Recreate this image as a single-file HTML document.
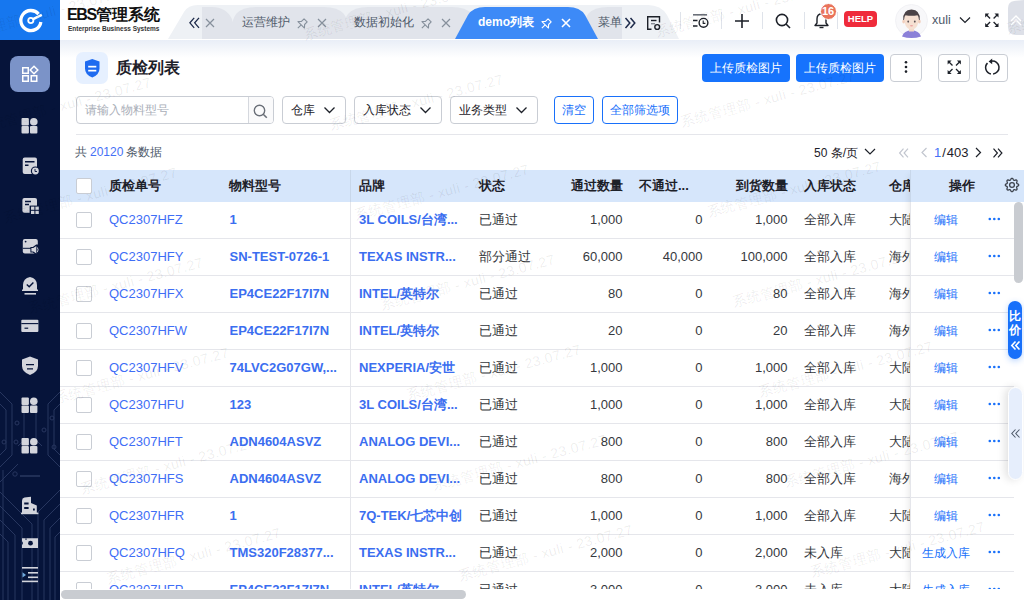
<!DOCTYPE html>
<html><head><meta charset="utf-8">
<style>
*{box-sizing:border-box;margin:0;padding:0}
html,body{width:1024px;height:600px;overflow:hidden;background:#fff}
body{position:relative;font-family:"Liberation Sans",sans-serif;font-size:12px;color:#1d2129}
.a{position:absolute}
svg{display:block;overflow:visible}
/* sidebar */
#side{left:0;top:0;width:60px;height:600px;background:#06143a;overflow:hidden}
#logo{left:0;top:0;width:60px;height:40px;background:#1677ef}
.si{position:absolute;left:22px;width:16px;height:16px}
/* header */
#hdr{left:60px;top:0;width:964px;height:40px;background:#fff}
.tabtxt{position:absolute;top:13px;font-size:12px;line-height:18px;color:#4e5969;white-space:nowrap}
.sep{position:absolute;top:12px;width:1px;height:17px;background:#dfe3ea}
/* content */
#main{left:60px;top:40px;width:964px;height:560px;background:linear-gradient(#e9eef7 0px,#fff 18px,#fff 100%);overflow:hidden}
.btnp{position:absolute;top:14px;height:28px;border-radius:4px;background:#1673fd;color:#fff;font-size:12px;line-height:28px;text-align:center}
.btno{position:absolute;top:14px;width:32px;height:28px;border-radius:4px;border:1px solid #c9cdd4;background:#fff}
.sel{position:absolute;top:56px;height:28px;border:1px solid #c9cdd4;border-radius:4px;background:#fff;font-size:12px;line-height:26px;color:#1d2129;padding-left:8px}
.sel svg{position:absolute;right:10px;top:10px}
.btnl{position:absolute;top:56px;height:28px;border:1px solid #1870fa;border-radius:4px;background:#fff;color:#1870fa;font-size:12px;line-height:26px;text-align:center}
/* table */
#thead{left:0;top:130px;width:964px;height:32px;background:#d6e6fb}
.th{position:absolute;top:0;line-height:32px;font-size:13px;font-weight:bold;color:#1d2129;white-space:nowrap}
.row{position:absolute;left:0;width:952px;height:37px;border-bottom:1px solid #e5e6eb;background:#fff}
.td{position:absolute;top:0;line-height:36px;font-size:13px;color:#35383d;white-space:nowrap}
.cb{position:absolute;left:16px;width:16px;height:16px;border:1px solid #c9cdd4;border-radius:2px;background:#fff}
.lk{color:#3f6ef6}
.bl{color:#3b6ef0;font-weight:bold}
.r{text-align:right}
</style></head><body>

<!-- SIDEBAR -->
<div id="side" class="a">
  <svg class="a" style="left:0;top:40px" width="60" height="560" viewBox="0 40 60 560">
    <!-- circuit pattern -->
    <g fill="none" stroke="#27365f" stroke-width="1">
      <path d="M0 392 L12 404 L12 455 L0 467"/>
      <path d="M0 404 L6 410 L6 449 L0 455"/>
      <circle cx="4" cy="442" r="2"/><circle cx="17" cy="423" r="2"/><circle cx="16" cy="442" r="2"/>
      <path d="M60 392 L48 404 L48 455 L60 467"/>
      <path d="M60 404 L54 410 L54 449 L60 455"/>
      <circle cx="52" cy="418" r="2"/><circle cx="54" cy="447" r="2"/><circle cx="44" cy="430" r="2"/>
      <path d="M24 400 L24 440 L18 446"/>
      <path d="M36 400 L36 440 L42 446"/>
      <path d="M3 470 L3 600"/>
      <path d="M0 482 L18 464"/>
      <circle cx="15" cy="474" r="2.2"/>
      <path d="M0 492 L32 524 L32 600"/>
      <path d="M0 506 L22 528 L22 600"/>
      <path d="M0 520 L15 535 L15 600"/>
      <path d="M0 534 L8 542 L8 600"/>
      <path d="M60 490 L38 512 L38 600"/>
      <path d="M60 504 L44 520 L44 600"/>
      <path d="M60 518 L50 528 L50 600"/>
      <path d="M60 532 L55 537 L55 600"/>
    </g>
    <!-- active button -->
    <rect x="10" y="56" width="40" height="36" rx="8" fill="#7b93c8"/>
    <g fill="none" stroke="#fff" stroke-width="1.5">
      <rect x="22.75" y="67.75" width="5.5" height="5.5"/>
      <path d="M34 66.2 L37.8 70 L34 73.8 L30.2 70 Z"/>
      <rect x="22.75" y="75.75" width="5.5" height="5.5"/>
      <rect x="31.25" y="75.75" width="5.5" height="5.5"/>
    </g>
    <!-- grid icons -->
    <g id="grid" fill="#d3d5dc">
      <rect x="21.5" y="118" width="7.4" height="7.4" rx="1"/>
      <circle cx="33.8" cy="121.7" r="3.8"/>
      <rect x="21.5" y="126" width="7.4" height="7.4" rx="1"/>
      <rect x="30" y="126" width="7.4" height="7.4" rx="1"/>
    </g>
    <use href="#grid" y="279.5"/>
    <use href="#grid" y="320"/>
    <!-- doc clock -->
    <rect x="22.7" y="157.4" width="14.3" height="16.6" rx="2" fill="#d3d5dc"/>
    <path d="M25 161.7 H34.5 M25 165.3 H28.5" stroke="#06143a" stroke-width="1.5"/>
    <circle cx="35.4" cy="171" r="4.6" fill="#06143a"/>
    <circle cx="35.4" cy="171" r="3.4" fill="#d3d5dc"/>
    <path d="M35 169 V171.5 H37" fill="none" stroke="#06143a" stroke-width="0.9"/>
    <!-- doc grid -->
    <rect x="22.4" y="198" width="14.6" height="14.8" rx="2" fill="#d3d5dc"/>
    <path d="M25 201.5 H31 M25 204.5 H29" stroke="#06143a" stroke-width="1.5"/>
    <rect x="29.6" y="205.6" width="10" height="9" fill="#06143a"/>
    <rect x="31" y="206.6" width="3.4" height="3.2" fill="#d3d5dc"/><rect x="35.4" y="206.6" width="3.4" height="3.2" fill="#d3d5dc"/>
    <rect x="31" y="210.8" width="3.4" height="3.2" fill="#d3d5dc"/><rect x="35.4" y="210.8" width="3.4" height="3.2" fill="#d3d5dc"/>
    <!-- card speaker -->
    <rect x="22.8" y="239" width="15" height="14.6" rx="2" fill="#d3d5dc"/>
    <path d="M22.8 248.3 H31" stroke="#06143a" stroke-width="1"/>
    <circle cx="25.6" cy="241.6" r="0.9" fill="#06143a"/>
    <path d="M30.4 247 H32.8 L36.2 244.6 H39 V255 H36.2 L32.8 252.6 H30.4 Z" fill="#06143a"/>
    <path d="M31.4 248 H33.3 L36.3 246 V253.6 L33.3 251.6 H31.4 Z" fill="#d3d5dc"/>
    <path d="M37.3 247.4 Q38.9 249.8 37.3 252.2" fill="none" stroke="#d3d5dc" stroke-width="0.9"/>
    <!-- alarm -->
    <path d="M23 290.5 V285 Q23 278.5 30 277 Q37 278.5 37 285 V290.5 Z" fill="#d3d5dc"/>
    <path d="M22 289.5 H38 V291 H22 Z" fill="#d3d5dc"/>
    <path d="M26.8 284.5 L29.2 286.8 L33.4 282.6" fill="none" stroke="#06143a" stroke-width="1.4"/>
    <rect x="24.5" y="293" width="11.5" height="1.6" fill="#d3d5dc"/>
    <!-- card -->
    <rect x="21.3" y="319.7" width="17.1" height="12.2" rx="1" fill="#d3d5dc"/>
    <path d="M21.3 323.6 H38.4" stroke="#06143a" stroke-width="1.1"/>
    <path d="M24.5 328.2 H28.2" stroke="#06143a" stroke-width="1.2"/>
    <!-- shield -->
    <path d="M30 356.5 L38 359.5 V366 Q38 372 30 375 Q22 372 22 366 V359.5 Z" fill="#d3d5dc"/>
    <path d="M26 364.6 H34 M27 368.8 H33" stroke="#06143a" stroke-width="1.3"/>
    <!-- separator -->
    <rect x="20" y="475.5" width="20" height="1" fill="#3a4a72"/>
    <!-- building -->
    <path d="M22 514 V500.5 Q22 498 24.5 497.5 L31 496.8 V514 Z" fill="#d3d5dc"/>
    <path d="M31 503 L36.8 505.5 V514 H31 Z" fill="#d3d5dc"/>
    <rect x="21" y="512.6" width="17.4" height="1.6" fill="#d3d5dc"/>
    <rect x="24.2" y="502.5" width="4.4" height="2" fill="#06143a"/><rect x="24.2" y="507" width="4.4" height="2" fill="#06143a"/>
    <rect x="33" y="508.5" width="1.8" height="2" fill="#06143a"/>
    <!-- ticket -->
    <path d="M22 538.3 H38 V548 H22 V545 Q24 543.2 22 541.3 Z" fill="#d3d5dc"/>
    <circle cx="30.5" cy="543.2" r="2.4" fill="#06143a"/>
    <path d="M26 538.3 V540" stroke="#06143a" stroke-width="1"/>
    <!-- list -->
    <g fill="#d3d5dc">
      <rect x="22" y="567" width="16" height="1.6"/>
      <rect x="28" y="572" width="10" height="1.6"/>
      <rect x="28" y="576.5" width="10" height="1.6"/>
      <rect x="22" y="580.6" width="16" height="1.6"/>
      <path d="M22.5 572.2 L26 574.9 L22.5 577.6 Z" fill="#6fa8dc"/>
    </g>
  </svg>
  <div id="logo" class="a">
    <svg class="a" style="left:0;top:0" width="60" height="40" viewBox="0 0 60 40">
      <path d="M38.6 14.1 A10.05 10.05 0 1 0 40.85 22.0" fill="none" stroke="#fff" stroke-width="3.3"/>
      <circle cx="30.8" cy="20.5" r="2.6" fill="none" stroke="#fff" stroke-width="1.8"/>
      <path d="M32.6 19.3 L41.8 14.9" stroke="#fff" stroke-width="2.6"/>
    </svg>
  </div>
</div>

<!-- HEADER -->
<div id="hdr" class="a">
  <div class="a" style="left:7px;top:6px;font-size:16px;font-weight:bold;line-height:18px;color:#111;white-space:nowrap"><span style="letter-spacing:-1.4px">EBS</span><span style="margin-left:0px">管理系统</span></div>
  <div class="a" style="left:8px;top:24px;font-size:6.5px;font-weight:bold;line-height:9px;color:#333;white-space:nowrap">Enterprise Business Systems</div>
  <!-- tab bar -->
  <svg class="a" style="left:0;top:0" width="964" height="40">
    <path d="M108 39 L124 12 Q128 5 138 5 L588 5 Q601 5 607 15 L619 39 Z" fill="#eef1f5"/>
    <!-- tab clipped -->
    <path d="M142 39 L142 7 L152 7 Q166 7 172 19 L176 39 Z" fill="#e1e4eb"/>
    <!-- tab 2 -->
    <path d="M168 39 Q172 19 176 14 Q182 7 196 7 L264 7 Q278 7 284 14 Q288 19 292 39 Z" fill="#e1e4eb"/>
    <!-- tab 3 -->
    <path d="M278 39 Q284 19 288 14 Q294 7 308 7 L392 7 Q406 7 412 14 Q416 19 420 39 Z" fill="#e1e4eb"/>
    <!-- tab menu -->
    <path d="M520 39 Q524 19 528 14 Q534 7 548 7 L562 7 L562 39 Z" fill="#e1e4eb"/>
    <!-- active -->
    <path d="M395 39 L408 15 Q413 7 425 7 L508 7 Q520 7 525 15 L538 39 Z" fill="#3d8af7"/>
  </svg>
  <svg class="a" style="left:129px;top:17px" width="11" height="12"><path d="M5.2 0.8 L0.9 5.8 L5.2 10.8 M10 0.8 L5.7 5.8 L10 10.8" fill="none" stroke="#1d2a4a" stroke-width="1.3"/></svg>
  <svg class="a" style="left:146px;top:19px" width="8" height="8"><path d="M0 0L8 8M8 0L0 8" stroke="#86909c" stroke-width="1.2"/></svg>
<svg class="a" style="left:0;top:0" width="964" height="40"><g transform="translate(237,17)" fill="none" stroke="#86909c" stroke-width="1.1" stroke-linejoin="round"><path d="M7.04 1.84 L4.5 4.39 L0.96 4.53 L7.47 11.04 L7.61 7.5 L10.16 4.96 Z"/><path d="M4.22 7.78 L0.82 11.18"/></g><path d="M258 19l8 8M266 19l-8 8" stroke="#86909c" stroke-width="1.2" fill="none"/><g transform="translate(361,17)" fill="none" stroke="#86909c" stroke-width="1.1" stroke-linejoin="round"><path d="M7.04 1.84 L4.5 4.39 L0.96 4.53 L7.47 11.04 L7.61 7.5 L10.16 4.96 Z"/><path d="M4.22 7.78 L0.82 11.18"/></g><path d="M382 19l8 8M390 19l-8 8" stroke="#86909c" stroke-width="1.2" fill="none"/><g transform="translate(481,17)" fill="none" stroke="#fff" stroke-width="1.1" stroke-linejoin="round"><path d="M7.04 1.84 L4.5 4.39 L0.96 4.53 L7.47 11.04 L7.61 7.5 L10.16 4.96 Z"/><path d="M4.22 7.78 L0.82 11.18"/></g><path d="M502 19l8 8M510 19l-8 8" stroke="#fff" stroke-width="1.6" fill="none"/>
    <path d="M565.5 18l4.3 5l-4.3 5M570.5 18l4.3 5l-4.3 5" fill="none" stroke="#1d2a4a" stroke-width="1.5"/>
  </svg>
  <div class="tabtxt" style="left:182px">运营维护</div>
  <div class="tabtxt" style="left:294px">数据初始化</div>
  <div class="tabtxt" style="left:418px;color:#fff;font-weight:bold;font-size:12px">demo列表</div>
  <div class="tabtxt" style="left:538px">菜单</div>
  <!-- header right -->
  <svg class="a" style="left:0;top:0" width="964" height="40">
    <!-- doc icon 647-660 -->
    <g fill="none" stroke="#1d2129" stroke-width="1.4">
      <path d="M599.5 22.5 V16.7 H587.7 V29.3 H591.5"/>
      <path d="M591 20.5 H596.5"/>
      <path d="M591 23.7 H595" stroke="#8a8f99"/>
      <circle cx="597.2" cy="27" r="2.4"/>
    </g>
    <rect x="620" y="12" width="1" height="17" fill="#dfe3ea"/>
    <!-- list clock icon 693-708 -->
    <g fill="none" stroke="#1d2129" stroke-width="1.4">
      <path d="M633 14.8 H647" stroke="#6b7079" stroke-width="1.6"/>
      <path d="M633 20.5 H637.5 M633 26 H637.5"/>
      <circle cx="643.5" cy="22.8" r="4.4"/>
      <path d="M643.2 20.6 V23.4 H645.4" stroke-width="1.1"/>
    </g>
    <rect x="661" y="12" width="1" height="17" fill="#dfe3ea"/>
    <!-- plus 735-749 -->
    <path d="M675 21 H689 M682 14 V28" stroke="#1d2129" stroke-width="1.6" fill="none"/>
    <rect x="702" y="12" width="1" height="17" fill="#dfe3ea"/>
    <!-- search 776-790 -->
    <g fill="none" stroke="#1d2129" stroke-width="1.6"><circle cx="722" cy="20" r="5.6"/><path d="M726 24 L730 28"/></g>
    <rect x="744" y="12" width="1" height="17" fill="#dfe3ea"/>
    <!-- bell 814-828 -->
    <g fill="none" stroke="#1d2129" stroke-width="1.4" stroke-linejoin="round">
      <path d="M755 25.5 H768 L766 23 V19 Q766 14 761.5 14 Q757 14 757 19 V23 Z"/>
      <path d="M759.5 27.5 H763.5"/>
    </g>
    <rect x="777" y="12" width="1" height="17" fill="#dfe3ea"/>
  </svg>
  <div class="a" style="left:759.5px;top:2.5px;width:17px;height:17px;border-radius:9px;background:#e9735b;color:#fff;font-size:11px;font-weight:bold;line-height:15px;text-align:center;border:1px solid #fff">16</div>
  <div class="a" style="left:784px;top:11px;width:33px;height:16px;border-radius:4px;background:#ef2b3b;color:#fff;font-size:9.5px;font-weight:bold;line-height:16px;text-align:center">HELP</div>
  <!-- avatar -->
  <svg class="a" style="left:835px;top:4px" width="33" height="33" viewBox="0 0 33 33">
    <circle cx="16.5" cy="16.5" r="16" fill="#f8f8fa" stroke="#efeff2" stroke-width="0.8"/>
    <path d="M7 32.5 Q9 26.5 16.5 26.3 Q24 26.5 26 32.5 Q21.5 34 16.5 34 Q11.5 34 7 32.5Z" fill="#8b80d8"/>
    <rect x="14" y="23" width="5" height="4.5" fill="#f3d9c8"/>
    <path d="M8.8 10 Q8.8 25.5 16.5 25.5 Q24.2 25.5 24.2 10 Z" fill="#f6e0d2"/>
    <ellipse cx="8.6" cy="17.5" rx="1.3" ry="2" fill="#f1cfbd"/><ellipse cx="24.4" cy="17.5" rx="1.3" ry="2" fill="#f1cfbd"/>
    <path d="M8.3 16 Q7.6 6 16.5 5.6 Q25.4 6 24.7 16 L24 16 Q23.6 12 22.5 11.3 Q16.5 12.3 10.5 11.3 Q9.4 12 9 16 Z" fill="#4b4347"/>
    <ellipse cx="13.2" cy="17.6" rx="0.9" ry="1.1" fill="#5a5054"/><ellipse cx="19.8" cy="17.6" rx="0.9" ry="1.1" fill="#5a5054"/>
    <ellipse cx="16.5" cy="21.8" rx="1.6" ry="0.7" fill="#eda6a6"/>
  </svg>
  <div class="a" style="left:872px;top:11px;font-size:12.5px;line-height:18px;color:#4e5969">xuli</div>
  <svg class="a" style="left:0;top:0" width="964" height="40">
    <path d="M900 17.5 L905 22.5 L910 17.5" fill="none" stroke="#1d2129" stroke-width="1.2"/>
    <!-- fullscreen 985-999 -->
    <g transform="translate(924.6,13)"><g fill="none" stroke="#1d2129" stroke-width="1.3"><path d="M1.5 1.5L5.5 5.5M13 1.5L9 5.5M1.5 13L5.5 9M13 13L9 9"/></g><g fill="#1d2129"><path d="M0.6 0.6H4.6L0.6 4.6Z"/><path d="M13.9 0.6H9.9L13.9 4.6Z"/><path d="M0.6 13.9H4.6L0.6 9.9Z"/><path d="M13.9 13.9H9.9L13.9 9.9Z"/></g></g>
    <!-- back-to-top tab at right -->
    <path d="M964 0 V35 L956 35 Q948 35 948 27 V8 Q948 2 954 1 Z" fill="#d9dde5" opacity="0.9"/>
    <path d="M951 21 L956 16 L961 21 M951 25 L956 20 L961 25" fill="none" stroke="#fff" stroke-width="1.3"/>
  </svg>
</div>

<!-- MAIN -->
<div id="main" class="a">
  <!-- title -->
  <div class="a" style="left:16px;top:12px;width:32px;height:32px;border-radius:7px;background:#e6f0ff"></div>
  <svg class="a" style="left:25px;top:19px" width="15" height="19" viewBox="0 0 15 19">
    <path d="M7.25 0 L14.5 2.6 V9.5 Q14.5 15.6 7.25 18.6 Q0 15.6 0 9.5 V2.6 Z" fill="#1f6bf0"/>
    <rect x="3.2" y="6.8" width="8.1" height="1.7" fill="#fff"/><rect x="3.2" y="10.8" width="8.1" height="1.7" fill="#fff"/>
  </svg>
  <div class="a" style="left:56px;top:16px;font-size:16px;font-weight:bold;line-height:24px;color:#1d2129">质检列表</div>
  <div class="btnp" style="left:642px;width:88px">上传质检图片</div>
  <div class="btnp" style="left:736px;width:88px">上传质检图片</div>
  <div class="btno" style="left:830px"><svg class="a" style="left:13px;top:5px" width="4" height="14"><circle cx="2" cy="2.3" r="1.3" fill="#1d2129"/><circle cx="2" cy="7" r="1.3" fill="#1d2129"/><circle cx="2" cy="11.6" r="1.3" fill="#1d2129"/></svg></div>
  <div class="btno" style="left:878px"><svg class="a" style="left:8px;top:5px" width="14" height="14" viewBox="0 0 14 14"><g fill="none" stroke="#1d2129" stroke-width="1.3"><path d="M1.5 1.5L5.5 5.5M13 1.5L9 5.5M1.5 13L5.5 9M13 13L9 9"/></g><g fill="#1d2129"><path d="M0.6 0.6H4.6L0.6 4.6Z"/><path d="M13.9 0.6H9.9L13.9 4.6Z"/><path d="M0.6 13.9H4.6L0.6 9.9Z"/><path d="M13.9 13.9H9.9L13.9 9.9Z"/></g></svg></div>
  <div class="btno" style="left:916px"><svg class="a" style="left:0;top:0" width="30" height="26" viewBox="0 0 30 26"><g fill="none" stroke="#1d2129" stroke-width="1.5"><path d="M14.6 6.2 A6.4 6.4 0 1 1 16.1 18.9"/><path d="M10.5 8.1 A6.4 6.4 0 0 0 13.9 18.9"/></g><path d="M11.6 6.4 L15.2 3.6 L15.2 9.2 Z" fill="#1d2129"/></svg></div>
  <!-- filters -->
  <div class="a" style="left:16px;top:56px;width:198px;height:28px;border:1px solid #c9cdd4;border-radius:4px;background:#fff;overflow:hidden">
    <div class="a" style="left:8px;top:0;line-height:26px;font-size:12px;color:#a9aeb8">请输入物料型号</div>
    <div class="a" style="left:170.5px;top:0;width:27px;height:26px;border-left:1px solid #d5d8de;background:#fafafb"></div>
    <svg class="a" style="left:176px;top:6.5px" width="15" height="15" viewBox="0 0 15 15"><circle cx="6.5" cy="6.5" r="5.2" fill="none" stroke="#6b7079" stroke-width="1.4"/><path d="M10.2 10.2 L13.8 13.8" stroke="#6b7079" stroke-width="1.6"/></svg>
  </div>
  <div class="sel" style="left:222px;width:64px">仓库<svg width="11" height="6" viewBox="0 0 11 6"><path d="M0.5 0.5 L5.5 5.5 L10.5 0.5" fill="none" stroke="#1d2129" stroke-width="1.3"/></svg></div>
  <div class="sel" style="left:294px;width:88px">入库状态<svg width="11" height="6" viewBox="0 0 11 6"><path d="M0.5 0.5 L5.5 5.5 L10.5 0.5" fill="none" stroke="#1d2129" stroke-width="1.3"/></svg></div>
  <div class="sel" style="left:390px;width:88px">业务类型<svg width="11" height="6" viewBox="0 0 11 6"><path d="M0.5 0.5 L5.5 5.5 L10.5 0.5" fill="none" stroke="#1d2129" stroke-width="1.3"/></svg></div>
  <div class="btnl" style="left:494px;width:40px">清空</div>
  <div class="btnl" style="left:542px;width:76px">全部筛选项</div>
  <div class="a" style="left:16px;top:94px;width:932px;height:1px;background:#e5e6eb"></div>
  <!-- info row -->
  <div class="a" style="left:15px;top:104px;font-size:12px;line-height:16px;color:#4e5969;white-space:nowrap">共<span style="color:#4570f6;margin:0 3px 0 3px">20120</span>条数据</div>
  <div class="a" style="left:754px;top:104.5px;font-size:12px;line-height:16px;color:#1d2129;white-space:nowrap">50 条/页</div>
  <svg class="a" style="left:0;top:0" width="964" height="560">
    <path d="M805 109 L810 114 L815 109" fill="none" stroke="#1d2129" stroke-width="1.2"/>
    <path d="M843.5 108.6 L839.6 113 L843.5 117.4 M848 108.6 L844.1 113 L848 117.4" fill="none" stroke="#c2c6cf" stroke-width="1.2"/>
    <path d="M866.5 108 L862 112.5 L866.5 117" fill="none" stroke="#c2c6cf" stroke-width="1.2"/>
    <path d="M916 108 L920.5 112.5 L916 117" fill="none" stroke="#1d2129" stroke-width="1.2"/>
    <path d="M933.5 108.6 L937.4 113 L933.5 117.4 M938 108.6 L941.9 113 L938 117.4" fill="none" stroke="#1d2129" stroke-width="1.2"/>
  </svg>
  <div class="a" style="left:874px;top:104.5px;font-size:13px;line-height:16px;color:#1d2129;white-space:nowrap"><span style="color:#4570f6">1</span><span style="margin:0 1px">/</span>403</div>
  <!-- TABLE -->
  <!--TABLE-->
<div class="a" style="left:0;top:130px;width:964px;height:419px;overflow:hidden">
<div class="a" style="left:0;top:0;width:964px;height:32px;background:#d6e6fb">
<div class="cb" style="top:8px"></div>
<div class="th" style="left:49px">质检单号</div>
<div class="th" style="left:169px">物料型号</div>
<div class="th" style="left:299px">品牌</div>
<div class="th" style="left:419px">状态</div>
<div class="th r" style="right:401.5px">通过数量</div>
<div class="th" style="left:579px">不通过...</div>
<div class="th r" style="right:236.5px">到货数量</div>
<div class="th" style="left:744px">入库状态</div>
<div class="th" style="left:829px">仓库</div>
<div class="a" style="left:290px;top:0;width:1px;height:32px;background:#c8d7ea"></div>
</div>
<div class="row" style="top:32px;width:954px">
<div class="cb" style="top:10px"></div>
<div class="td lk" style="left:49px">QC2307HFZ</div>
<div class="td bl" style="left:169.5px">1</div>
<div class="a" style="left:290px;top:0;width:1px;height:37px;background:#e5e6eb"></div>
<div class="td bl" style="left:299px">3L COILS/台湾...</div>
<div class="td" style="left:419px">已通过</div>
<div class="td r" style="right:391.5px">1,000</div>
<div class="td r" style="right:311.5px">0</div>
<div class="td r" style="right:226.5px">1,000</div>
<div class="td" style="left:744px">全部入库</div>
<div class="td" style="left:829px">大陆</div>
</div>
<div class="row" style="top:69px;width:954px">
<div class="cb" style="top:10px"></div>
<div class="td lk" style="left:49px">QC2307HFY</div>
<div class="td bl" style="left:169.5px">SN-TEST-0726-1</div>
<div class="a" style="left:290px;top:0;width:1px;height:37px;background:#e5e6eb"></div>
<div class="td bl" style="left:299px">TEXAS INSTR...</div>
<div class="td" style="left:419px">部分通过</div>
<div class="td r" style="right:391.5px">60,000</div>
<div class="td r" style="right:311.5px">40,000</div>
<div class="td r" style="right:226.5px">100,000</div>
<div class="td" style="left:744px">全部入库</div>
<div class="td" style="left:829px">海外</div>
</div>
<div class="row" style="top:106px;width:954px">
<div class="cb" style="top:10px"></div>
<div class="td lk" style="left:49px">QC2307HFX</div>
<div class="td bl" style="left:169.5px">EP4CE22F17I7N</div>
<div class="a" style="left:290px;top:0;width:1px;height:37px;background:#e5e6eb"></div>
<div class="td bl" style="left:299px">INTEL/英特尔</div>
<div class="td" style="left:419px">已通过</div>
<div class="td r" style="right:391.5px">80</div>
<div class="td r" style="right:311.5px">0</div>
<div class="td r" style="right:226.5px">80</div>
<div class="td" style="left:744px">全部入库</div>
<div class="td" style="left:829px">海外</div>
</div>
<div class="row" style="top:143px;width:954px">
<div class="cb" style="top:10px"></div>
<div class="td lk" style="left:49px">QC2307HFW</div>
<div class="td bl" style="left:169.5px">EP4CE22F17I7N</div>
<div class="a" style="left:290px;top:0;width:1px;height:37px;background:#e5e6eb"></div>
<div class="td bl" style="left:299px">INTEL/英特尔</div>
<div class="td" style="left:419px">已通过</div>
<div class="td r" style="right:391.5px">20</div>
<div class="td r" style="right:311.5px">0</div>
<div class="td r" style="right:226.5px">20</div>
<div class="td" style="left:744px">全部入库</div>
<div class="td" style="left:829px">海外</div>
</div>
<div class="row" style="top:180px;width:954px">
<div class="cb" style="top:10px"></div>
<div class="td lk" style="left:49px">QC2307HFV</div>
<div class="td bl" style="left:169.5px">74LVC2G07GW,...</div>
<div class="a" style="left:290px;top:0;width:1px;height:37px;background:#e5e6eb"></div>
<div class="td bl" style="left:299px">NEXPERIA/安世</div>
<div class="td" style="left:419px">已通过</div>
<div class="td r" style="right:391.5px">1,000</div>
<div class="td r" style="right:311.5px">0</div>
<div class="td r" style="right:226.5px">1,000</div>
<div class="td" style="left:744px">全部入库</div>
<div class="td" style="left:829px">大陆</div>
</div>
<div class="row" style="top:217px;width:954px">
<div class="cb" style="top:10px"></div>
<div class="td lk" style="left:49px">QC2307HFU</div>
<div class="td bl" style="left:169.5px">123</div>
<div class="a" style="left:290px;top:0;width:1px;height:37px;background:#e5e6eb"></div>
<div class="td bl" style="left:299px">3L COILS/台湾...</div>
<div class="td" style="left:419px">已通过</div>
<div class="td r" style="right:391.5px">1,000</div>
<div class="td r" style="right:311.5px">0</div>
<div class="td r" style="right:226.5px">1,000</div>
<div class="td" style="left:744px">全部入库</div>
<div class="td" style="left:829px">大陆</div>
</div>
<div class="row" style="top:254px;width:954px">
<div class="cb" style="top:10px"></div>
<div class="td lk" style="left:49px">QC2307HFT</div>
<div class="td bl" style="left:169.5px">ADN4604ASVZ</div>
<div class="a" style="left:290px;top:0;width:1px;height:37px;background:#e5e6eb"></div>
<div class="td bl" style="left:299px">ANALOG DEVI...</div>
<div class="td" style="left:419px">已通过</div>
<div class="td r" style="right:391.5px">800</div>
<div class="td r" style="right:311.5px">0</div>
<div class="td r" style="right:226.5px">800</div>
<div class="td" style="left:744px">全部入库</div>
<div class="td" style="left:829px">大陆</div>
</div>
<div class="row" style="top:291px;width:954px">
<div class="cb" style="top:10px"></div>
<div class="td lk" style="left:49px">QC2307HFS</div>
<div class="td bl" style="left:169.5px">ADN4604ASVZ</div>
<div class="a" style="left:290px;top:0;width:1px;height:37px;background:#e5e6eb"></div>
<div class="td bl" style="left:299px">ANALOG DEVI...</div>
<div class="td" style="left:419px">已通过</div>
<div class="td r" style="right:391.5px">800</div>
<div class="td r" style="right:311.5px">0</div>
<div class="td r" style="right:226.5px">800</div>
<div class="td" style="left:744px">全部入库</div>
<div class="td" style="left:829px">海外</div>
</div>
<div class="row" style="top:328px;width:954px">
<div class="cb" style="top:10px"></div>
<div class="td lk" style="left:49px">QC2307HFR</div>
<div class="td bl" style="left:169.5px">1</div>
<div class="a" style="left:290px;top:0;width:1px;height:37px;background:#e5e6eb"></div>
<div class="td bl" style="left:299px">7Q-TEK/七芯中创</div>
<div class="td" style="left:419px">已通过</div>
<div class="td r" style="right:391.5px">1,000</div>
<div class="td r" style="right:311.5px">0</div>
<div class="td r" style="right:226.5px">1,000</div>
<div class="td" style="left:744px">全部入库</div>
<div class="td" style="left:829px">大陆</div>
</div>
<div class="row" style="top:365px;width:954px">
<div class="cb" style="top:10px"></div>
<div class="td lk" style="left:49px">QC2307HFQ</div>
<div class="td bl" style="left:169.5px">TMS320F28377...</div>
<div class="a" style="left:290px;top:0;width:1px;height:37px;background:#e5e6eb"></div>
<div class="td bl" style="left:299px">TEXAS INSTR...</div>
<div class="td" style="left:419px">已通过</div>
<div class="td r" style="right:391.5px">2,000</div>
<div class="td r" style="right:311.5px">0</div>
<div class="td r" style="right:226.5px">2,000</div>
<div class="td" style="left:744px">未入库</div>
<div class="td" style="left:829px">大陆</div>
</div>
<div class="row" style="top:402px;width:954px">
<div class="cb" style="top:10px"></div>
<div class="td lk" style="left:49px">QC2307HFP</div>
<div class="td bl" style="left:169.5px">EP4CE22F17I7N</div>
<div class="a" style="left:290px;top:0;width:1px;height:37px;background:#e5e6eb"></div>
<div class="td bl" style="left:299px">INTEL/英特尔</div>
<div class="td" style="left:419px">已通过</div>
<div class="td r" style="right:391.5px">3,000</div>
<div class="td r" style="right:311.5px">0</div>
<div class="td r" style="right:226.5px">3,000</div>
<div class="td" style="left:744px">未入库</div>
<div class="td" style="left:829px">大陆</div>
</div>
<div class="a" style="left:850px;top:0;width:114px;height:419px;background:transparent;box-shadow:-6px 0 8px -6px rgba(0,0,0,0.12)">
<div class="a" style="left:0;top:0;width:114px;height:32px;background:#d6e6fb;border-left:1px solid #c8d7ea"></div>
<div class="th" style="left:39px">操作</div>
<svg class="a" style="left:91.79999999999995px;top:4.800000000000011px" width="20" height="20" viewBox="0 0 20 20"><path fill="none" stroke="#3d434d" stroke-width="1.3" stroke-linejoin="round" d="M16.75 10.0 L16.62 10.43 L16.27 10.83 L15.79 11.15 L15.29 11.42 L14.89 11.66 L14.67 11.93 L14.63 12.28 L14.74 12.74 L14.91 13.28 L15.02 13.85 L14.99 14.38 L14.77 14.77 L14.38 14.99 L13.85 15.02 L13.28 14.91 L12.74 14.74 L12.28 14.63 L11.93 14.67 L11.66 14.89 L11.42 15.29 L11.15 15.79 L10.83 16.27 L10.43 16.62 L10.0 16.75 L9.57 16.62 L9.17 16.27 L8.85 15.79 L8.58 15.29 L8.34 14.89 L8.07 14.67 L7.72 14.63 L7.26 14.74 L6.72 14.91 L6.15 15.02 L5.62 14.99 L5.23 14.77 L5.01 14.38 L4.98 13.85 L5.09 13.28 L5.26 12.74 L5.37 12.28 L5.33 11.93 L5.11 11.66 L4.71 11.42 L4.21 11.15 L3.73 10.83 L3.38 10.43 L3.25 10.0 L3.38 9.57 L3.73 9.17 L4.21 8.85 L4.71 8.58 L5.11 8.34 L5.33 8.07 L5.37 7.72 L5.26 7.26 L5.09 6.72 L4.98 6.15 L5.01 5.62 L5.23 5.23 L5.62 5.01 L6.15 4.98 L6.72 5.09 L7.26 5.26 L7.72 5.37 L8.07 5.33 L8.34 5.11 L8.58 4.71 L8.85 4.21 L9.17 3.73 L9.57 3.38 L10.0 3.25 L10.43 3.38 L10.83 3.73 L11.15 4.21 L11.42 4.71 L11.66 5.11 L11.93 5.33 L12.28 5.37 L12.74 5.26 L13.28 5.09 L13.85 4.98 L14.38 5.01 L14.77 5.23 L14.99 5.62 L15.02 6.15 L14.91 6.72 L14.74 7.26 L14.63 7.72 L14.67 8.07 L14.89 8.34 L15.29 8.58 L15.79 8.85 L16.27 9.17 L16.62 9.57 Z"/><circle cx="10" cy="10" r="2.4" fill="none" stroke="#3d434d" stroke-width="1.3"/></svg>
<div class="a" style="left:0;top:32px;width:104px;height:37px;background:#fff;border-bottom:1px solid #e5e6eb;border-left:1px solid #e5e6eb">
<div class="td" style="left:23px;font-size:12px;color:#1870fa">编辑</div>
<svg class="a" style="left:76.5px;top:14.8px" width="13" height="4"><circle cx="1.8" cy="2" r="1.3" fill="#1870fa"/><circle cx="6.3" cy="2" r="1.3" fill="#1870fa"/><circle cx="10.8" cy="2" r="1.3" fill="#1870fa"/></svg>
</div>
<div class="a" style="left:0;top:69px;width:104px;height:37px;background:#fff;border-bottom:1px solid #e5e6eb;border-left:1px solid #e5e6eb">
<div class="td" style="left:23px;font-size:12px;color:#1870fa">编辑</div>
<svg class="a" style="left:76.5px;top:14.8px" width="13" height="4"><circle cx="1.8" cy="2" r="1.3" fill="#1870fa"/><circle cx="6.3" cy="2" r="1.3" fill="#1870fa"/><circle cx="10.8" cy="2" r="1.3" fill="#1870fa"/></svg>
</div>
<div class="a" style="left:0;top:106px;width:104px;height:37px;background:#fff;border-bottom:1px solid #e5e6eb;border-left:1px solid #e5e6eb">
<div class="td" style="left:23px;font-size:12px;color:#1870fa">编辑</div>
<svg class="a" style="left:76.5px;top:14.8px" width="13" height="4"><circle cx="1.8" cy="2" r="1.3" fill="#1870fa"/><circle cx="6.3" cy="2" r="1.3" fill="#1870fa"/><circle cx="10.8" cy="2" r="1.3" fill="#1870fa"/></svg>
</div>
<div class="a" style="left:0;top:143px;width:104px;height:37px;background:#fff;border-bottom:1px solid #e5e6eb;border-left:1px solid #e5e6eb">
<div class="td" style="left:23px;font-size:12px;color:#1870fa">编辑</div>
<svg class="a" style="left:76.5px;top:14.8px" width="13" height="4"><circle cx="1.8" cy="2" r="1.3" fill="#1870fa"/><circle cx="6.3" cy="2" r="1.3" fill="#1870fa"/><circle cx="10.8" cy="2" r="1.3" fill="#1870fa"/></svg>
</div>
<div class="a" style="left:0;top:180px;width:104px;height:37px;background:#fff;border-bottom:1px solid #e5e6eb;border-left:1px solid #e5e6eb">
<div class="td" style="left:23px;font-size:12px;color:#1870fa">编辑</div>
<svg class="a" style="left:76.5px;top:14.8px" width="13" height="4"><circle cx="1.8" cy="2" r="1.3" fill="#1870fa"/><circle cx="6.3" cy="2" r="1.3" fill="#1870fa"/><circle cx="10.8" cy="2" r="1.3" fill="#1870fa"/></svg>
</div>
<div class="a" style="left:0;top:217px;width:104px;height:37px;background:#fff;border-bottom:1px solid #e5e6eb;border-left:1px solid #e5e6eb">
<div class="td" style="left:23px;font-size:12px;color:#1870fa">编辑</div>
<svg class="a" style="left:76.5px;top:14.8px" width="13" height="4"><circle cx="1.8" cy="2" r="1.3" fill="#1870fa"/><circle cx="6.3" cy="2" r="1.3" fill="#1870fa"/><circle cx="10.8" cy="2" r="1.3" fill="#1870fa"/></svg>
</div>
<div class="a" style="left:0;top:254px;width:104px;height:37px;background:#fff;border-bottom:1px solid #e5e6eb;border-left:1px solid #e5e6eb">
<div class="td" style="left:23px;font-size:12px;color:#1870fa">编辑</div>
<svg class="a" style="left:76.5px;top:14.8px" width="13" height="4"><circle cx="1.8" cy="2" r="1.3" fill="#1870fa"/><circle cx="6.3" cy="2" r="1.3" fill="#1870fa"/><circle cx="10.8" cy="2" r="1.3" fill="#1870fa"/></svg>
</div>
<div class="a" style="left:0;top:291px;width:104px;height:37px;background:#fff;border-bottom:1px solid #e5e6eb;border-left:1px solid #e5e6eb">
<div class="td" style="left:23px;font-size:12px;color:#1870fa">编辑</div>
<svg class="a" style="left:76.5px;top:14.8px" width="13" height="4"><circle cx="1.8" cy="2" r="1.3" fill="#1870fa"/><circle cx="6.3" cy="2" r="1.3" fill="#1870fa"/><circle cx="10.8" cy="2" r="1.3" fill="#1870fa"/></svg>
</div>
<div class="a" style="left:0;top:328px;width:104px;height:37px;background:#fff;border-bottom:1px solid #e5e6eb;border-left:1px solid #e5e6eb">
<div class="td" style="left:23px;font-size:12px;color:#1870fa">编辑</div>
<svg class="a" style="left:76.5px;top:14.8px" width="13" height="4"><circle cx="1.8" cy="2" r="1.3" fill="#1870fa"/><circle cx="6.3" cy="2" r="1.3" fill="#1870fa"/><circle cx="10.8" cy="2" r="1.3" fill="#1870fa"/></svg>
</div>
<div class="a" style="left:0;top:365px;width:104px;height:37px;background:#fff;border-bottom:1px solid #e5e6eb;border-left:1px solid #e5e6eb">
<div class="td" style="left:10.5px;font-size:12px;color:#1870fa">生成入库</div>
<svg class="a" style="left:76.5px;top:14.8px" width="13" height="4"><circle cx="1.8" cy="2" r="1.3" fill="#1870fa"/><circle cx="6.3" cy="2" r="1.3" fill="#1870fa"/><circle cx="10.8" cy="2" r="1.3" fill="#1870fa"/></svg>
</div>
<div class="a" style="left:0;top:402px;width:104px;height:37px;background:#fff;border-bottom:1px solid #e5e6eb;border-left:1px solid #e5e6eb">
<div class="td" style="left:10.5px;font-size:12px;color:#1870fa">生成入库</div>
<svg class="a" style="left:76.5px;top:14.8px" width="13" height="4"><circle cx="1.8" cy="2" r="1.3" fill="#1870fa"/><circle cx="6.3" cy="2" r="1.3" fill="#1870fa"/><circle cx="10.8" cy="2" r="1.3" fill="#1870fa"/></svg>
</div>
</div>
<div class="a" style="left:954px;top:32px;width:9px;height:81px;border-radius:5px;background:#c9ccd1"></div>
</div>
<div class="a" style="left:1px;top:550px;width:405px;height:9px;border-radius:5px;background:#c9ccd1"></div>
<div class="a" style="left:948px;top:261px;width:14px;height:58px;border-radius:7px;background:#1870fa;box-shadow:0 2px 6px rgba(24,112,250,0.3)"></div>
<div class="a" style="left:948px;top:269px;width:14px;font-size:12px;line-height:14px;font-weight:bold;color:#fff;text-align:center">比<br>价</div>
<svg class="a" style="left:951px;top:301px" width="9" height="9"><path d="M4.5 0.5L0.8 4.5L4.5 8.5M8.5 0.5L4.8 4.5L8.5 8.5" fill="none" stroke="#fff" stroke-width="1.6"/></svg>
<div class="a" style="left:948px;top:347px;width:15px;height:93px;border-radius:8px;background:#e6eefc;border:1.5px solid #fff;box-shadow:-3px 0 8px rgba(0,0,0,0.12)"></div>
<svg class="a" style="left:951px;top:389px" width="9" height="9"><path d="M4.5 0.5L0.8 4.5L4.5 8.5M8.5 0.5L4.8 4.5L8.5 8.5" fill="none" stroke="#4e5969" stroke-width="1.1"/></svg>
<!--/TABLE-->
</div>

<!--WM--><svg class="a" style="left:0;top:0;pointer-events:none" width="1024" height="600"><g fill="rgba(0,0,0,0.075)" font-family="Liberation Sans, sans-serif" font-size="14" letter-spacing="0.4"><text x="-47.3" y="43.0" transform="rotate(-15 -47.3 43.0)">系统管理部 - xuli - 23.07.27</text><text x="304.6" y="39.9" transform="rotate(-15 304.6 39.9)">系统管理部 - xuli - 23.07.27</text><text x="656.6" y="36.8" transform="rotate(-15 656.6 36.8)">系统管理部 - xuli - 23.07.27</text><text x="1008.5" y="33.8" transform="rotate(-15 1008.5 33.8)">系统管理部 - xuli - 23.07.27</text><text x="-21.4" y="133.1" transform="rotate(-15 -21.4 133.1)">系统管理部 - xuli - 23.07.27</text><text x="330.6" y="130.0" transform="rotate(-15 330.6 130.0)">系统管理部 - xuli - 23.07.27</text><text x="682.5" y="126.9" transform="rotate(-15 682.5 126.9)">系统管理部 - xuli - 23.07.27</text><text x="4.6" y="223.2" transform="rotate(-15 4.6 223.2)">系统管理部 - xuli - 23.07.27</text><text x="356.5" y="220.1" transform="rotate(-15 356.5 220.1)">系统管理部 - xuli - 23.07.27</text><text x="708.5" y="217.0" transform="rotate(-15 708.5 217.0)">系统管理部 - xuli - 23.07.27</text><text x="30.5" y="313.3" transform="rotate(-15 30.5 313.3)">系统管理部 - xuli - 23.07.27</text><text x="382.4" y="310.2" transform="rotate(-15 382.4 310.2)">系统管理部 - xuli - 23.07.27</text><text x="734.4" y="307.1" transform="rotate(-15 734.4 307.1)">系统管理部 - xuli - 23.07.27</text><text x="56.4" y="403.4" transform="rotate(-15 56.4 403.4)">系统管理部 - xuli - 23.07.27</text><text x="408.4" y="400.3" transform="rotate(-15 408.4 400.3)">系统管理部 - xuli - 23.07.27</text><text x="760.3" y="397.2" transform="rotate(-15 760.3 397.2)">系统管理部 - xuli - 23.07.27</text><text x="82.3" y="493.5" transform="rotate(-15 82.3 493.5)">系统管理部 - xuli - 23.07.27</text><text x="434.3" y="490.4" transform="rotate(-15 434.3 490.4)">系统管理部 - xuli - 23.07.27</text><text x="786.2" y="487.3" transform="rotate(-15 786.2 487.3)">系统管理部 - xuli - 23.07.27</text><text x="108.3" y="583.6" transform="rotate(-15 108.3 583.6)">系统管理部 - xuli - 23.07.27</text><text x="460.2" y="580.5" transform="rotate(-15 460.2 580.5)">系统管理部 - xuli - 23.07.27</text><text x="812.2" y="577.4" transform="rotate(-15 812.2 577.4)">系统管理部 - xuli - 23.07.27</text></g></svg><!--/WM-->
</body></html>
